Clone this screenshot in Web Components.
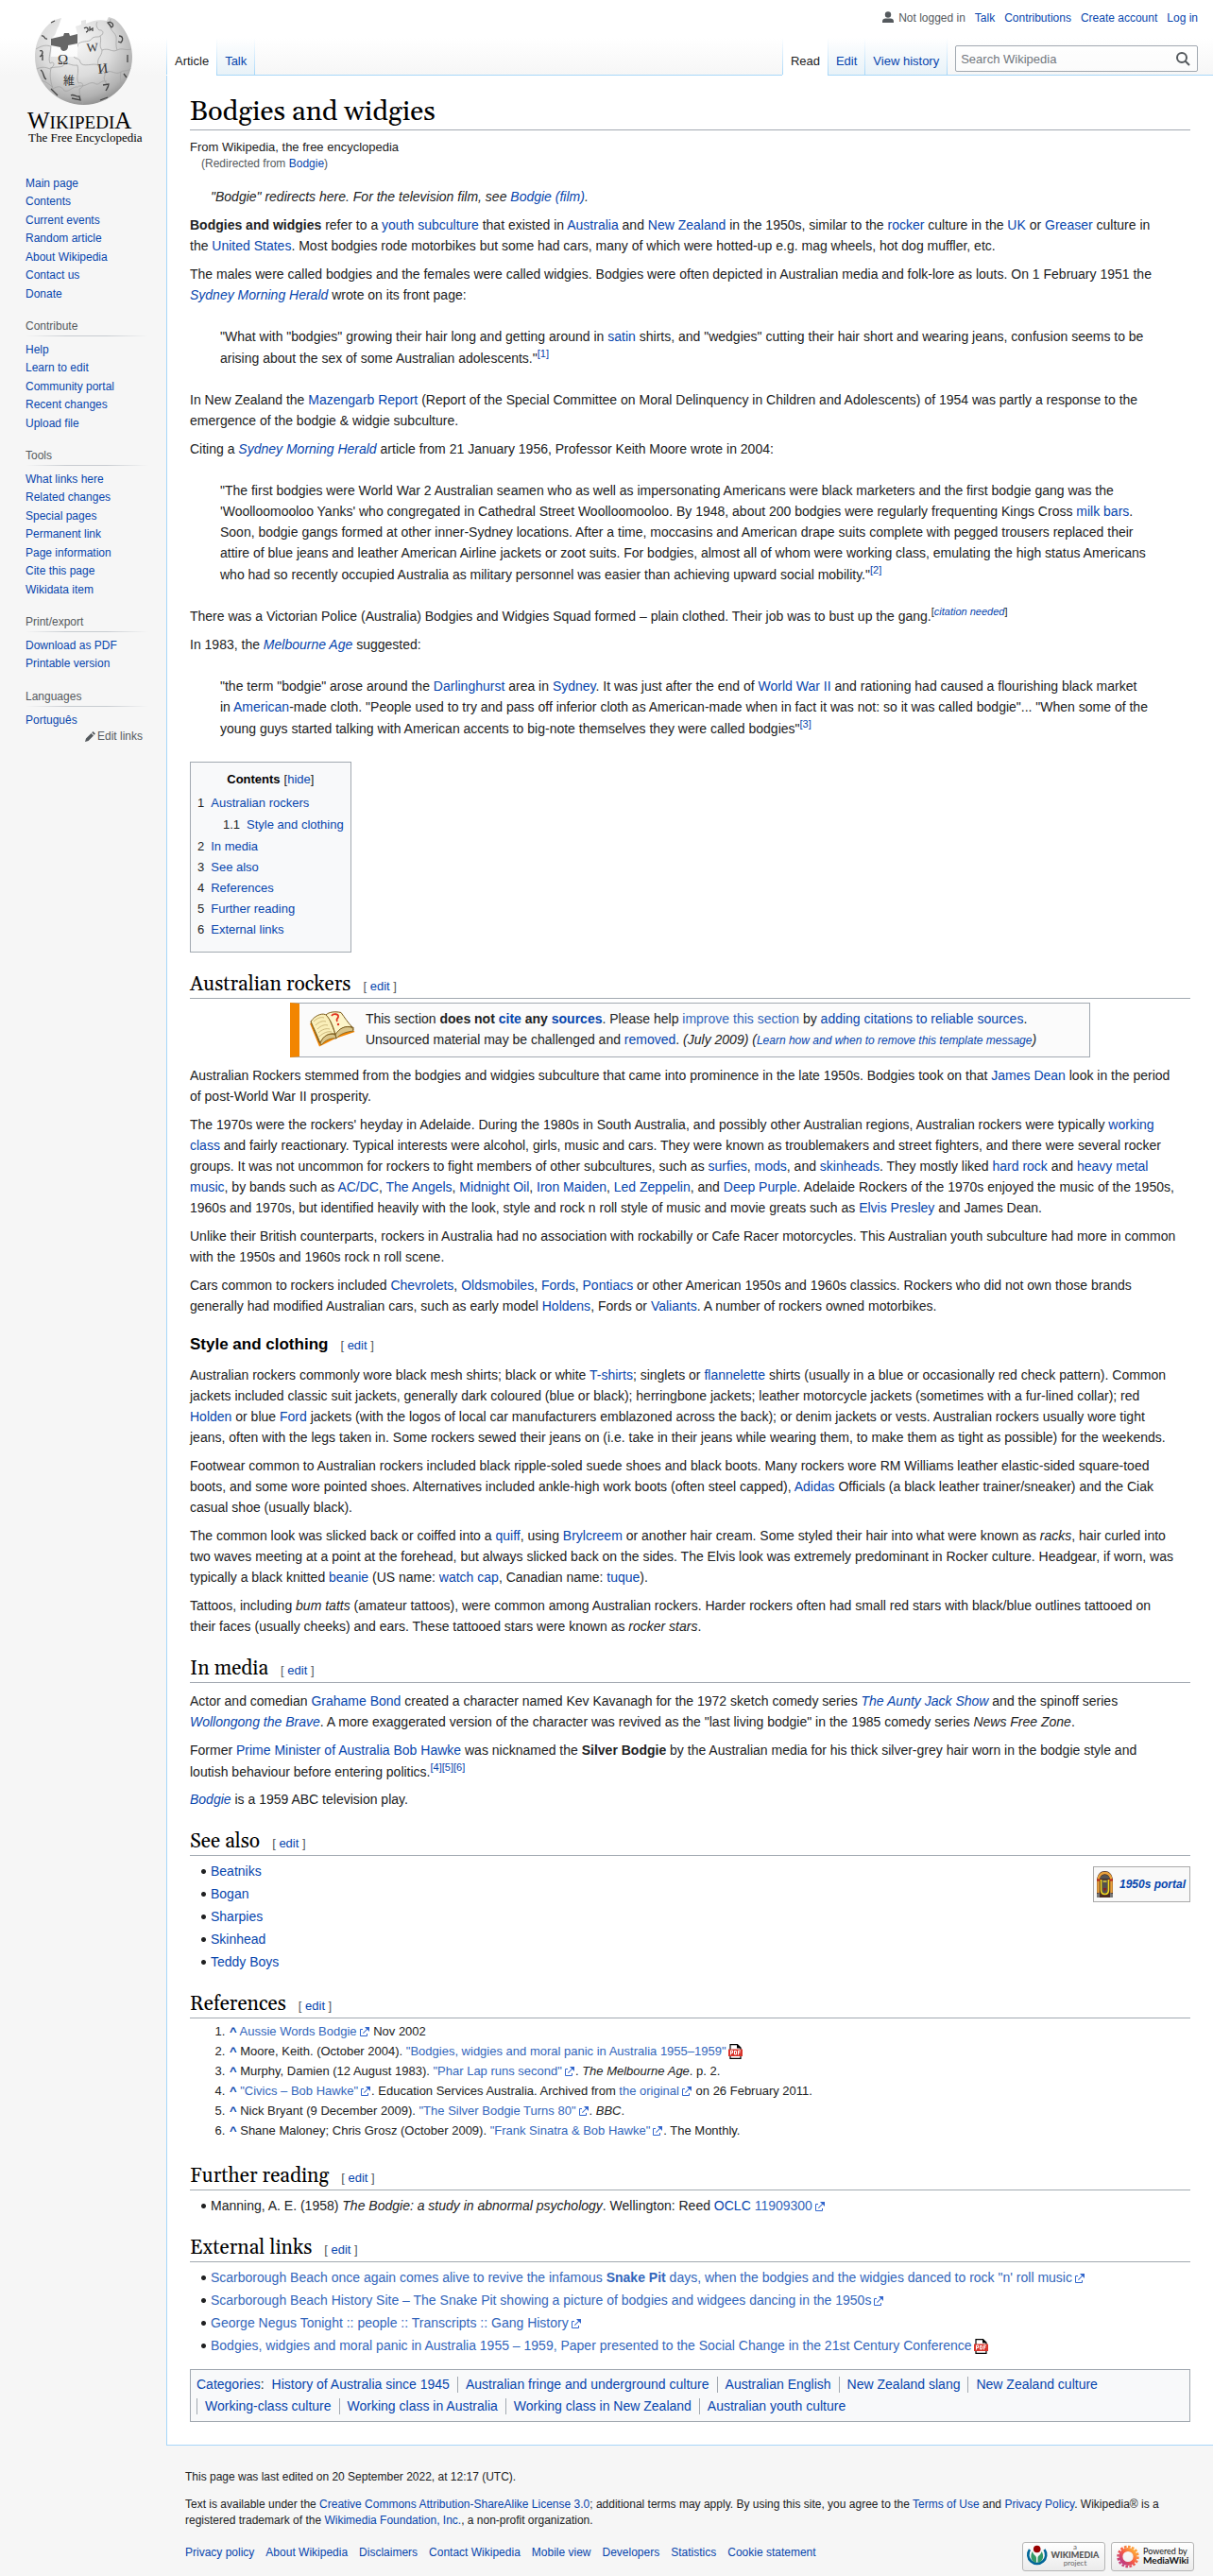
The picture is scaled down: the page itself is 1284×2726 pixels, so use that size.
<!DOCTYPE html>
<html lang="en">
<head>
<meta charset="utf-8">
<meta name="viewport" content="width=device-width, initial-scale=1">
<title>Bodgies and widgies - Wikipedia</title>
<style>
  :root { --link: #0645ad; --ext: #3366bb; --text: #202122; --muted: #54595d; --rule: #a2a9b1; --tab: #a7d7f9; --serif: Georgia, Gelasio, "Liberation Serif", serif; }
  body { margin: 0; color: var(--text); background: #f6f6f6; font: 14px/22px "Liberation Sans", Arial, sans-serif; }
  a { color: var(--link); text-decoration: none; }
  a:hover { text-decoration: underline; }
  p { margin: 8px 0; }
  article > p { padding-right: 11px; }
  b a { font-weight: bold; }
  sup { font-size: 11px; line-height: 14px; vertical-align: super; }
  article ul { margin: 5px 0 0 12px; padding: 0; list-style: none; }
  article ul li { padding-left: 10px; background: radial-gradient(circle, var(--text) 2px, transparent 3px) 0 9px / 5px 5px no-repeat; }
  article ul li + li { margin-top: 2px; }
  article ol { margin: 4px 0 0 41px; padding: 0 0 3px; font-size: 13px; line-height: 20px; }
  article ol li { padding-left: 1px; margin-bottom: 1px; }
  .backlink { font-weight: bold; }
  .sub { font-size: 13px; line-height: 20px; }
  .redirect { font-size: 12px; line-height: 14px; margin: 0 0 17px 12px; color: var(--muted); }
  .hatnote { font-style: italic; padding-left: 22px; margin-bottom: 7px; }
</style>
</head>
<body>

<wiki-page>
  <wiki-logo slot="side"></wiki-logo>
  <side-portlet slot="side" items="Main page|Contents|Current events|Random article|About Wikipedia|Contact us|Donate"></side-portlet>
  <side-portlet slot="side" heading="Contribute" items="Help|Learn to edit|Community portal|Recent changes|Upload file"></side-portlet>
  <side-portlet slot="side" heading="Tools" items="What links here|Related changes|Special pages|Permanent link|Page information|Cite this page|Wikidata item"></side-portlet>
  <side-portlet slot="side" heading="Print/export" items="Download as PDF|Printable version"></side-portlet>
  <side-portlet slot="side" heading="Languages" items="Português" edit="Edit links"></side-portlet>

  <personal-tools slot="header"></personal-tools>
  <page-tabs slot="header"></page-tabs>

  <article>
    <wiki-heading level="1">Bodgies and widgies</wiki-heading>
    <div class="sub">From Wikipedia, the free encyclopedia</div>
    <div class="redirect">(Redirected from <a href="#">Bodgie</a>)</div>
    <div class="hatnote">"Bodgie" redirects here. For the television film, see <a href="#">Bodgie (film)</a>.</div>

    <p><b>Bodgies and widgies</b> refer to a <a href="#">youth subculture</a> that existed in <a href="#">Australia</a> and <a href="#">New Zealand</a> in the 1950s, similar to the <a href="#">rocker</a> culture in the <a href="#">UK</a> or <a href="#">Greaser</a> culture in the&nbsp;<a href="#">United States</a>. Most bodgies rode motorbikes but some had cars, many of which were hotted-up e.g. mag wheels, hot dog muffler, etc.</p>
    <p>The males were called bodgies and the females were called widgies. Bodgies were often depicted in Australian media and folk-lore as louts. On 1 February 1951 the <i><a href="#">Sydney Morning Herald</a></i> wrote on its front page:</p>
    <quote-block>"What with "bodgies" growing their hair long and getting around in <a href="#">satin</a> shirts, and "wedgies" cutting their hair short and wearing jeans, confusion seems to be arising about the sex of some Australian adolescents."<sup><a href="#">[1]</a></sup></quote-block>
    <p>In New Zealand the <a href="#">Mazengarb Report</a> (Report of the Special Committee on Moral Delinquency in Children and Adolescents) of 1954 was partly a response to the emergence of the bodgie &amp; widgie subculture.</p>
    <p>Citing a <i><a href="#">Sydney Morning Herald</a></i> article from 21 January 1956, Professor Keith Moore wrote in 2004:</p>
    <quote-block>"The first bodgies were World War 2 Australian seamen who as well as impersonating Americans were black marketers and the first bodgie gang was the 'Woolloomooloo Yanks' who congregated in Cathedral Street Woolloomooloo. By 1948, about 200 bodgies were regularly frequenting Kings Cross <a href="#">milk bars</a>. Soon, bodgie gangs formed at other inner-Sydney locations. After a time, moccasins and American drape suits complete with pegged trousers replaced their attire of blue jeans and leather American Airline jackets or zoot suits. For bodgies, almost all of whom were working class, emulating the high status Americans who had so recently occupied Australia as military personnel was easier than achieving upward social mobility."<sup><a href="#">[2]</a></sup></quote-block>
    <p>There was a Victorian Police (Australia) Bodgies and Widgies Squad formed – plain clothed. Their job was to bust up the gang.<sup>[<i><a href="#">citation needed</a></i>]</sup></p>
    <p>In 1983, the <i><a href="#">Melbourne Age</a></i> suggested:</p>
    <quote-block>"the term "bodgie" arose around the <a href="#">Darlinghurst</a> area in <a href="#">Sydney</a>. It was just after the end of <a href="#">World War II</a> and rationing had caused a flourishing black market in <a href="#">American</a>-made cloth. "People used to try and pass off inferior cloth as American-made when in fact it was not: so it was called bodgie"... "When some of the young guys started talking with American accents to big-note themselves they were called bodgies"<sup><a href="#">[3]</a></sup></quote-block>

    <toc-box></toc-box>

    <wiki-heading>Australian rockers</wiki-heading>
    <notice-box>This section <b>does not <a href="#">cite</a> any <a href="#">sources</a></b>. Please help <a href="#" style="color: var(--ext)">improve this section</a> by <a href="#">adding citations to reliable sources</a>. Unsourced material may be challenged and <a href="#">removed</a>. <i>(July 2009)</i> <i>(<a href="#" style="font-size: 12px">Learn how and when to remove this template message</a>)</i></notice-box>
    <p>Australian Rockers stemmed from the bodgies and widgies subculture that came into prominence in the late 1950s. Bodgies took on that <a href="#">James Dean</a> look in the period of post-World War II prosperity.</p>
    <p>The 1970s were the rockers' heyday in Adelaide. During the 1980s in South Australia, and possibly other Australian regions, Australian rockers were typically <a href="#">working class</a> and fairly reactionary. Typical interests were alcohol, girls, music and cars. They were known as troublemakers and street fighters, and there were several rocker groups. It was not uncommon for rockers to fight members of other subcultures, such as <a href="#">surfies</a>, <a href="#">mods</a>, and <a href="#">skinheads</a>. They mostly liked <a href="#">hard rock</a> and <a href="#">heavy metal music</a>, by bands such as <a href="#">AC/DC</a>, <a href="#">The Angels</a>, <a href="#">Midnight Oil</a>, <a href="#">Iron Maiden</a>, <a href="#">Led Zeppelin</a>, and <a href="#">Deep Purple</a>. Adelaide Rockers of the 1970s enjoyed the music of the 1950s, 1960s and 1970s, but identified heavily with the look, style and rock n roll style of music and movie greats such as <a href="#">Elvis Presley</a> and James Dean.</p>
    <p>Unlike their British counterparts, rockers in Australia had no association with rockabilly or Cafe Racer motorcycles. This Australian youth subculture had more in common with the 1950s and 1960s rock n roll scene.</p>
    <p>Cars common to rockers included <a href="#">Chevrolets</a>, <a href="#">Oldsmobiles</a>, <a href="#">Fords</a>, <a href="#">Pontiacs</a> or other American 1950s and 1960s classics. Rockers who did not own those brands generally had modified Australian cars, such as early model <a href="#">Holdens</a>, Fords or <a href="#">Valiants</a>. A number of rockers owned motorbikes.</p>

    <wiki-heading level="3">Style and clothing</wiki-heading>
    <p>Australian rockers commonly wore black mesh shirts; black or white <a href="#">T-shirts</a>; singlets or <a href="#">flannelette</a> shirts (usually in a blue or occasionally red check pattern). Common jackets included classic suit jackets, generally dark coloured (blue or black); herringbone jackets; leather motorcycle jackets (sometimes with a fur-lined collar); red <a href="#">Holden</a> or blue <a href="#">Ford</a> jackets (with the logos of local car manufacturers emblazoned across the back); or denim jackets or vests. Australian rockers usually wore tight jeans, often with the legs taken in. Some rockers sewed their jeans on (i.e. take in their jeans while wearing them, to make them as tight as possible) for the weekends.</p>
    <p>Footwear common to Australian rockers included black ripple-soled suede shoes and black boots. Many rockers wore RM Williams leather elastic-sided square-toed boots, and some wore pointed shoes. Alternatives included ankle-high work boots (often steel capped), <a href="#">Adidas</a> Officials (a black leather trainer/sneaker) and the Ciak casual shoe (usually black).</p>
    <p>The common look was slicked back or coiffed into a <a href="#">quiff</a>, using <a href="#">Brylcreem</a> or another hair cream. Some styled their hair into what were known as <i>racks</i>, hair curled into two waves meeting at a point at the forehead, but always slicked back on the sides. The Elvis look was extremely predominant in Rocker culture. Headgear, if worn, was typically a black knitted <a href="#">beanie</a> (US name: <a href="#">watch cap</a>, Canadian name: <a href="#">tuque</a>).</p>
    <p>Tattoos, including <i>bum tatts</i> (amateur tattoos), were common among Australian rockers. Harder rockers often had small red stars with black/blue outlines tattooed on their&nbsp;faces (usually cheeks) and ears. These tattooed stars were known as <i>rocker stars</i>.</p>

    <wiki-heading>In media</wiki-heading>
    <p>Actor and comedian <a href="#">Grahame Bond</a> created a character named Kev Kavanagh for the 1972 sketch comedy series <i><a href="#">The Aunty Jack Show</a></i> and the spinoff series <i><a href="#">Wollongong the Brave</a></i>. A more exaggerated version of the character was revived as the "last living bodgie" in the 1985 comedy series <i>News Free Zone</i>.</p>
    <p>Former <a href="#">Prime Minister of Australia</a> <a href="#">Bob Hawke</a> was nicknamed the <b>Silver Bodgie</b> by the Australian media for his thick silver-grey hair worn in the bodgie style and loutish&nbsp;behaviour before entering politics.<sup><a href="#">[4]</a><a href="#">[5]</a><a href="#">[6]</a></sup></p>
    <p><i><a href="#">Bodgie</a></i> is a 1959 ABC television play.</p>

    <wiki-heading>See also</wiki-heading>
    <see-also>
      <ul>
        <li><a href="#">Beatniks</a></li>
        <li><a href="#">Bogan</a></li>
        <li><a href="#">Sharpies</a></li>
        <li><a href="#">Skinhead</a></li>
        <li><a href="#">Teddy Boys</a></li>
      </ul>
      <portal-box slot="aside">1950s portal</portal-box>
    </see-also>

    <wiki-heading>References</wiki-heading>
    <ol>
      <li><a class="backlink" href="#">^</a> <ext-link>Aussie Words Bodgie</ext-link> Nov 2002</li>
      <li><a class="backlink" href="#">^</a> Moore, Keith. (October 2004). <ext-link type="pdf">"Bodgies, widgies and moral panic in Australia 1955–1959"</ext-link></li>
      <li><a class="backlink" href="#">^</a> Murphy, Damien (12 August 1983). <ext-link>"Phar Lap runs second"</ext-link>. <i>The Melbourne Age</i>. p. 2.</li>
      <li><a class="backlink" href="#">^</a> <ext-link>"Civics – Bob Hawke"</ext-link>. Education Services Australia. Archived from <ext-link>the original</ext-link> on 26 February 2011.</li>
      <li><a class="backlink" href="#">^</a> Nick Bryant (9 December 2009). <ext-link>"The Silver Bodgie Turns 80"</ext-link>. <i>BBC</i>.</li>
      <li><a class="backlink" href="#">^</a> Shane Maloney; Chris Grosz (October 2009). <ext-link>"Frank Sinatra &amp; Bob Hawke"</ext-link>. The Monthly.</li>
    </ol>

    <wiki-heading>Further reading</wiki-heading>
    <ul>
      <li>Manning, A. E. (1958) <i>The Bodgie: a study in abnormal psychology</i>. Wellington: Reed <a href="#">OCLC</a> <ext-link>11909300</ext-link></li>
    </ul>

    <wiki-heading>External links</wiki-heading>
    <ul>
      <li><ext-link>Scarborough Beach once again comes alive to revive the infamous <b>Snake Pit</b> days, when the bodgies and the widgies danced to rock "n' roll music</ext-link></li>
      <li><ext-link>Scarborough Beach History Site – The Snake Pit showing a picture of bodgies and widgees dancing in the 1950s</ext-link></li>
      <li><ext-link>George Negus Tonight :: people :: Transcripts :: Gang History</ext-link></li>
      <li><ext-link type="pdf">Bodgies, widgies and moral panic in Australia 1955 – 1959, Paper presented to the Social Change in the 21st Century Conference</ext-link></li>
    </ul>

    <category-bar items="History of Australia since 1945|Australian fringe and underground culture|Australian English|New Zealand slang|New Zealand culture|Working-class culture|Working class in Australia|Working class in New Zealand|Australian youth culture"></category-bar>
  </article>

  <wiki-footer slot="footer">
    <p slot="info">This page was last edited on 20 September 2022, at 12:17 (UTC).</p>
    <p slot="info">Text is available under the <a href="#">Creative Commons Attribution-ShareAlike License 3.0</a>; additional terms may apply. By using this site, you agree to the <a href="#">Terms of Use</a> and <a href="#">Privacy Policy</a>. Wikipedia® is a registered trademark of the <a href="#">Wikimedia Foundation, Inc.</a>, a non-profit organization.</p>
  </wiki-footer>
</wiki-page>

<script>
const LINK = `a { color: var(--link); text-decoration: none; } a:hover { text-decoration: underline; }`;

function define(name, render) {
  customElements.define(name, class extends HTMLElement {
    constructor() { super(); this.attachShadow({ mode: 'open' }); }
    connectedCallback() {
      const t = document.createElement('template');
      t.innerHTML = render(this);
      this.shadowRoot.replaceChildren(t.content);
      if (this.localName === 'toc-box') {
        const button = this.shadowRoot.querySelector('button');
        const list = this.shadowRoot.querySelector('ul');
        button.addEventListener('click', () => {
          list.hidden = !list.hidden;
          button.textContent = list.hidden ? 'show' : 'hide';
        });
      }
    }
  });
}

define('wiki-page', () => `
  <style>
    :host { display: flex; align-items: stretch; background: linear-gradient(#fff 40px, #f6f6f6 80px); }
    nav { flex: 0 0 176px; }
    .column { flex: 1; min-width: 0; }
    main { background: #fff; border-left: 1px solid var(--tab); border-bottom: 1px solid var(--tab); padding: 20px 24px 24px; }
  </style>
  <nav><slot name="side"></slot></nav>
  <div class="column">
    <header><slot name="header"></slot></header>
    <main><slot></slot></main>
    <slot name="footer"></slot>
  </div>`);

define('wiki-logo', () => `
  <style>
    :host { display: block; padding-bottom: 25px; }
    a, svg { display: block; width: 100%; }
  </style>
  <a href="#" aria-label="Visit the main page">
  <svg viewBox="0 0 176 160" font-family="Liberation Serif, serif">
    <defs>
      <radialGradient id="g" cx="0.42" cy="0.3" r="0.75">
        <stop offset="0" stop-color="#f6f6f6"/><stop offset="0.5" stop-color="#dcdcdc"/><stop offset="0.82" stop-color="#b2b2b2"/><stop offset="1" stop-color="#858585"/>
      </radialGradient>
      <clipPath id="c"><path d="M65,19 58,21C46,28 37,43 37,60A51.500,51 0 0 0 140,60C140,43 131,27 121,20L115,18 113,22C105,20 98,22 91,25L91,21 86,22 86,26 80,28 82,36V60H54L55,40C60,37 59,32 62,28Z"/></clipPath>
    </defs>
    <path fill="url(#g)" d="M65,19 58,21C46,28 37,43 37,60A51.500,51 0 0 0 140,60C140,43 131,27 121,20L115,18 113,22C105,20 98,22 91,25L91,21 86,22 86,26 80,28 82,36V60H54L55,40C60,37 59,32 62,28Z"/>
    <path fill="#666" d="M54,41 67,38 68,35H73L74,38 82,36V46L72,48C73,55 64,56 64,50L54,48Z"/>
    <g clip-path="url(#c)" fill="none" stroke="#a4a4a4" stroke-width="0.8">
      <path d="M38,52C46,47 50,48 54,49M54,49C53,58 51,62 53,67C57,64 59,69 54,72C52,80 54,88 56,94M37,74C44,70 48,71 53,73M82,46C84,50 78,52 77,58C79,64 84,60 85,66C87,72 100,66 104,69M104,69C102,61 108,60 108,53C104,48 108,44 106,38C111,36 109,31 105,32C101,28 102,25 103,23M83,46C90,42 94,46 98,40C102,38 104,40 106,38M53,72C62,70 66,72 68,68C73,66 75,70 82,69M82,69C84,78 80,82 83,88C88,86 90,92 84,94C84,100 86,106 88,110M56,94C62,90 66,92 68,96C74,98 76,91 83,92M83,91C92,92 94,86 100,88C105,92 106,84 113,86M104,69C106,76 112,74 111,80C108,84 114,88 113,92C116,96 112,102 110,108M108,53C116,50 118,56 124,53C130,50 132,54 139,52M112,76C120,74 122,80 128,76C132,74 136,76 139,72M124,53C121,44 126,40 120,34C116,30 116,26 117,20M128,76C126,84 130,88 127,96M40,86C48,84 52,90 56,92"/>
    </g>
    <g fill="#333">
      <text x="61" y="68" font-size="15">Ω</text>
      <text x="92" y="55" font-size="13" transform="rotate(-4 92 55)">W</text>
      <text x="104" y="78" font-size="15" transform="rotate(-6 104 78)">И</text>
      <text x="67" y="90" font-size="12" font-family="Noto Sans CJK JP, sans-serif">維</text>
    </g>
    <g fill="none" stroke="#444" stroke-width="1.300">
      <path d="M109,90L115,89C115,92 113,94 112,96M89,30C93,27 95,33 91,34M95,28V32L98,30 98,33M126,38C130,38 131,42 128,45L125,44M44,38C48,37 46,42 50,41M42,54C46,52 46,58 42,60M45,58V64M43,74C47,76 45,82 49,84M54,94L61,101M75,101C78,99 80,103 84,102L85,106 76,104M106,106L114,103M131,78L134,82M135,58V66M114,24C118,22 122,27 118,29ZM54,24L58,22"/>
    </g>
    <text x="29" y="136" font-size="25">W<tspan font-size="19">IKIPEDI</tspan>A</text>
    <text x="30" y="150" font-size="13">The Free Encyclopedia</text>
  </svg></a>`);

define('side-portlet', el => {
  const heading = el.getAttribute('heading'), edit = el.getAttribute('edit');
  return `
  <style>
    ${LINK}
    :host { display: block; margin: 0 19px 14px 27px; font-size: 12px; line-height: 13px; }
    h3 { margin: 0; font-size: 12px; font-weight: normal; line-height: 20px; color: var(--muted); padding-bottom: 1px;
         background: linear-gradient(to right, rgba(200,204,209,0), #c8ccd1 33%, #c8ccd1 66%, rgba(200,204,209,0)) bottom / 100% 1px no-repeat; }
    ul { list-style: none; margin: 0; padding: 0; }
    h3 + ul { padding-top: 5px; }
    li { padding: 3px 0; }
    li:nth-child(even) { padding-bottom: 4px; }
    .edit { display: flex; justify-content: flex-end; align-items: center; gap: 2px; padding-right: 6px; line-height: 14px; }
    .edit a { color: var(--muted); }
  </style>
  ${heading ? `<h3>${heading}</h3>` : ''}
  <ul>${el.getAttribute('items').split('|').map(t => `<li><a href="#">${t}</a></li>`).join('')}</ul>
  ${edit ? `<div class="edit"><svg width="11" height="11" viewBox="0 0 11 11" fill="#54595d"><path d="M0,11 1,7.500 6.500,2 9,4.500 3.500,10ZM7.200,1.300 8.500,0 11,2.500 9.700,3.800Z"/></svg><a href="#">${edit}</a></div>` : ''}`;
});

define('personal-tools', () => `
  <style>
    ${LINK}
    :host { display: block; }
    ul { display: flex; justify-content: flex-end; align-items: center; flex-wrap: wrap; gap: 0 10px; list-style: none; margin: 0; padding: 11px 16px 13px 0; font-size: 12px; line-height: 16px; }
    .anon { display: flex; align-items: center; gap: 5px; color: var(--muted); }
  </style>
  <ul>
    <li class="anon"><svg width="12" height="14" viewBox="0 0 12 14" fill="#54595d"><circle cx="6" cy="3.500" r="3.200"/><path d="M0,12V10.500C0,8.500 1.500,7.500 3.500,7.500H8.500C10.500,7.500 12,8.500 12,10.500V12Z"/></svg>Not logged in</li>
    <li><a href="#">Talk</a></li><li><a href="#">Contributions</a></li><li><a href="#">Create account</a></li><li><a href="#">Log in</a></li>
  </ul>`);

define('page-tabs', () => `
  <style>
    ${LINK}
    :host { display: flex; font-size: 13px; line-height: 16px; }
    a { box-sizing: border-box; height: 40px; padding: 17px 8px 0 9px; white-space: nowrap; border-bottom: 1px solid var(--tab);
        background: linear-gradient(#fff, var(--tab)) left / 1px 100% no-repeat, linear-gradient(#fff, #e8f2f8); }
    a.on { color: var(--text); border-bottom-color: #fff; background: linear-gradient(#fff, var(--tab)) left / 1px 100% no-repeat, #fff; }
    .gap { flex: 1; }
    .gap, form { border-bottom: 1px solid var(--tab); background: linear-gradient(#fff, var(--tab)) left / 1px 100% no-repeat; }
    form { padding: 8px 16px 3px 9px; }
    .box { display: flex; align-items: center; box-sizing: border-box; width: 20vw; height: 28px; border: 1px solid var(--rule); border-radius: 2px; background: rgba(255,255,255,.5); }
    input { flex: 1; min-width: 0; border: 0; background: none; padding: 0 0 0 5px; font: 13px "Liberation Sans", sans-serif; outline: none; }
    input::placeholder { color: #72777d; opacity: 1; }
    button { border: 0; background: none; padding: 0 7px; display: flex; cursor: pointer; }
  </style>
  <a class="on" href="#">Article</a><a href="#">Talk</a>
  <div class="gap"></div>
  <a class="on" href="#">Read</a><a href="#">Edit</a><a href="#">View history</a>
  <form onsubmit="return false"><div class="box">
    <input type="search" aria-label="Search Wikipedia" placeholder="Search Wikipedia">
    <button aria-label="Go"><svg width="15" height="15" viewBox="0 0 15 15" fill="none" stroke="#54595d" stroke-width="2"><circle cx="6" cy="6" r="5"/><path d="M9.500,9.500 14,14"/></svg></button>
  </div></form>`);

define('wiki-heading', el => {
  const n = el.getAttribute('level') || '2';
  const edit = n === '1' ? '' : '<span>[ <a href="#">edit</a> ]</span>';
  return `
  <style>
    ${LINK}
    :host { display: block; margin-top: 21px; }
    :host([level="1"]) { margin: 0 0 8px; }
    :host([level="3"]) { margin: 8px 0; padding-top: 8px; }
    div { display: flex; align-items: baseline; flex-wrap: wrap; column-gap: 13px; color: #000; }
    .l1, .l2 { border-bottom: 1px solid var(--rule); }
    h1, h2, h3 { margin: 0; font-weight: normal; }
    h1 { font: 29px/37px var(--serif); }
    h2 { font: 21px/27px var(--serif); }
    h3 { font-size: 17px; line-height: 27px; font-weight: bold; }
    span { font-size: 13px; line-height: 16px; color: var(--muted); }
  </style>
  <div class="l${n}"><h${n}><slot></slot></h${n}>${edit}</div>`;
});

define('quote-block', () => `
  <style>
    :host { display: block; margin: 14px 0; padding: 8px 44px 8px 32px; }
    blockquote { margin: 0; }
  </style>
  <blockquote><slot></slot></blockquote>`);

define('toc-box', () => {
  const row = (n, t, sub = '') => `<li><a href="#"><span>${n}</span>${t}</a>${sub}</li>`;
  return `
  <style>
    ${LINK}
    :host { display: table; box-sizing: border-box; margin-top: 16px; padding: 7px; border: 1px solid var(--rule); background: #f8f9fa; font-size: 13px; }
    .title { display: flex; justify-content: center; gap: 4px; padding-bottom: 3px; }
    h2 { margin: 0; font-size: 13px; line-height: 22px; color: #000; }
    button { border: 0; background: none; padding: 0; font: inherit; color: var(--link); cursor: pointer; }
    ul { list-style: none; margin: 0; padding: 0; }
    ul ul { margin-left: 27px; padding: 1px 0; }
    .list { padding-bottom: 5px; }
    li span { color: var(--text); padding-right: 7px; }
  </style>
  <div class="title"><h2>Contents</h2><div>[<button>hide</button>]</div></div>
  <ul class="list">
    ${row('1', 'Australian rockers', `<ul>${row('1.1', 'Style and clothing')}</ul>`)}
    ${row('2', 'In media')}${row('3', 'See also')}${row('4', 'References')}${row('5', 'Further reading')}${row('6', 'External links')}
  </ul>`;
});

define('notice-box', () => `
  <style>
    :host { display: flex; align-items: center; gap: 11px; box-sizing: border-box; width: 80%; margin: 4px auto 7px; padding: 5px 40px 6px 11px; border: 1px solid var(--rule); border-left: 10px solid #f28500; background: #fbfbfb; }
    svg { flex: none; }
  </style>
  <svg width="48" height="38" viewBox="0 0 48 38" stroke-linejoin="round">
    <path d="M0,13 10,37.500 27,29 47.500,22 44,18 12,33 3,12Z" fill="#f28500"/>
    <path d="M1,11 10,33 27,25 46,20V17L27,25Z" fill="#e9d9a0" stroke="#7a5a1c"/>
    <path d="M1,11C5,5 12,2 16,3.500C19,4 20,6 27,24C20,23 14,26 11,34C9,28 4,18 1,11Z" fill="#faefb9" stroke="#7a5a1c"/>
    <path d="M17,4C20,1 26,0 33,1.500C37,7 40,12 45,17C38,15 31,18 27,25C25,17 22,9 17,4Z" fill="#fdf5c9" stroke="#7a5a1c"/>
    <path d="M27,25C31,18 38,15 45,17.500L46,21C38,22 32,24 28,29ZM11,34C14,26 20,23 27,25L28,29C22,28 16,31 12,36Z" fill="#d9c58a" stroke="#7a5a1c" stroke-width="0.800"/>
    <path d="M4,11C8,7 12,6 15,7M6,15C10,11 14,10 17,11M8,19C12,15 16,14 19,15M9,23C13,19 18,18 21,19M10,27C14,23 19,21 23,22" fill="none" stroke="#c0aa6c" stroke-width="0.800"/>
    <path d="M23,5C25,2 31,3 30,6C30,8 27,8 29,11" fill="none" stroke="#e0301e" stroke-width="1.800"/><circle cx="30" cy="14" r="1.200" fill="#e0301e"/>
  </svg>
  <div><slot></slot></div>`);

define('see-also', () => `
  <style>
    :host { display: flex; justify-content: space-between; align-items: flex-start; }
    .aside { padding-top: 11px; }
  </style>
  <div><slot></slot></div><div class="aside"><slot name="aside"></slot></div>`);

define('portal-box', () => `
  <style>
    :host { display: flex; align-items: center; gap: 7px; border: 1px solid #aaa; background: #f9f9f9; padding: 4px 4px 4px 3px; font-size: 12px; font-weight: bold; font-style: italic; }
    a { color: var(--link); text-decoration: none; white-space: nowrap; }
  </style>
  <svg width="17" height="28" viewBox="0 0 17 28">
    <path d="M0,28V9C1,3 4,0 8.500,0S16,3 17,9V28Z" fill="#4a2a20"/>
    <path d="M1.500,23V10C2,4.500 5,2 8.500,2S15,4.500 15.500,10V23" fill="none" stroke="#e8a13c" stroke-width="2.500"/>
    <path d="M3.500,8C4,5 6,4 8.500,4S13,5 13.500,8Z" fill="#555"/>
    <path d="M0,9.500H4M13,9.500H17" stroke="#b0251c" stroke-width="2"/>
    <path d="M4.500,9V20C4.500,26 12.500,26 12.500,20V9" fill="#54504c" stroke="#f0d820" stroke-width="1.600"/>
    <path d="M6.500,11H10.500" stroke="#e8d030" stroke-width="1.500"/>
    <path d="M6.500,18H10.500L8.500,22Z" fill="#8a2020"/>
    <path d="M0,24 3,23V28H0ZM17,24 14,23V28H17Z" fill="#777"/>
  </svg>
  <a href="#"><slot></slot></a>`);

define('ext-link', el => {
  const icon = el.getAttribute('type') === 'pdf'
    ? `<svg class="pdf" width="15" height="16" viewBox="0 0 15 16"><path d="M2,.600H9.500L13,4V15.400H2Z" fill="#fff" stroke="#000" stroke-width="1.200"/><path d="M9,0V4.500H13.500Z"/><path d="M0,5.500H15V13H0Z" fill="#d9342b"/><path d="M2.500,11.500V7H4.500V9.500H2.500M6.500,7V11H8.500V7.500H6.500M10.500,11.500V7H13M10.500,9H12.500" fill="none" stroke="#fff"/></svg>`
    : `<svg width="12" height="12" viewBox="0 0 12 12" fill="#3366cc"><path d="M6,1h5v5L8.860,3.850 4.700,8 4,7.300l4.150-4.160zM2,3h2v1H2v6h6V8h1v2a1,1 0 0 1-1,1H2a1,1 0 0 1-1-1V4a1,1 0 0 1 1-1"/></svg>`;
  return `
  <style>
    ${LINK}
    :host { display: inline; }
    a { color: var(--ext); }
    svg { margin-left: 2px; vertical-align: -2px; }
    .pdf { vertical-align: -4px; }
  </style><a href="#"><slot></slot>${icon}</a>`;
});

define('category-bar', el => `
  <style>
    ${LINK}
    :host { display: block; margin-top: 14px; padding: 4px 6px; border: 1px solid var(--rule); background: #f8f9fa; }
    ul { display: inline; list-style: none; margin: 0; padding: 0; }
    li { display: inline-block; line-height: 17px; margin: 3px 0; padding: 0 8px; border-left: 1px solid var(--rule); }
    li:first-child { border: 0; }
  </style><a href="#">Categories</a>:<ul>${el.getAttribute('items').split('|').map(t => `<li><a href="#">${t}</a></li>`).join('<wbr>')}</ul>`);

define('wiki-footer', () => `
  <style>
    ${LINK}
    :host { display: block; padding: 25px 20px 5px; font-size: 12px; line-height: 17px; }
    ::slotted(p) { margin: 0 0 12px !important; }
    .row { display: flex; justify-content: space-between; align-items: center; flex-wrap: wrap; gap: 6px; }
    ul { display: flex; flex-wrap: wrap; gap: 0 12px; list-style: none; margin: 0; padding: 0 0 6px; }
    .badges { display: flex; gap: 6px; padding-top: 2px; }
    .badges a, .badges svg { display: block; }
  </style>
  <slot name="info"></slot>
  <div class="row">
    <ul>${['Privacy policy', 'About Wikipedia', 'Disclaimers', 'Contact Wikipedia', 'Mobile view', 'Developers', 'Statistics', 'Cookie statement'].map(t => `<li><a href="#">${t}</a></li>`).join('')}</ul>
    <div class="badges">
      <a href="#" aria-label="Wikimedia Foundation"><svg width="88" height="31" viewBox="0 0 88 31">
        <defs><linearGradient id="b" x2="0" y2="1"><stop stop-color="#fff"/><stop offset="1" stop-color="#ebebeb"/></linearGradient></defs>
        <rect x=".500" y=".500" width="87" height="30" rx="2.500" fill="url(#b)" stroke="#b5b5b5"/>
        <path d="M8,8A9.500,9.500 0 1 0 23.500,8" fill="none" stroke="#006699" stroke-width="2.600"/>
        <path d="M15,22C9,21 8,14 11,10C11.500,14 15,14 15,17ZM16.500,22C22.500,21 23.500,14 20.500,10C20,14 16.500,14 16.500,17Z" fill="#339966"/>
        <circle cx="15.700" cy="7.500" r="3.800" fill="#990000"/>
        <g fill="#666" text-anchor="middle" font-family="Lato, sans-serif"><text x="56" y="8" font-size="8">a</text><text x="56" y="17" font-size="9" font-weight="900" fill="#555">WIKIMEDIA</text><text x="56" y="25" font-size="8">project</text></g>
      </svg></a>
      <a href="#" aria-label="Powered by MediaWiki"><svg width="88" height="31" viewBox="0 0 88 31">
        <defs><linearGradient id="d" x2="0" y2="1"><stop stop-color="#fff"/><stop offset="1" stop-color="#ebebeb"/></linearGradient>
        <linearGradient id="f" x1="1" y1="0" x2="0" y2="1"><stop stop-color="#fb3"/><stop offset=".500" stop-color="#f65a44"/><stop offset="1" stop-color="#b3318f"/></linearGradient></defs>
        <rect x=".500" y=".500" width="87" height="30" rx="2.500" fill="url(#d)" stroke="#b5b5b5"/>
        <circle cx="18" cy="15.500" r="7.600" fill="none" stroke="url(#f)" stroke-width="4"/>
        <circle cx="18" cy="15.500" r="10.500" fill="none" stroke="url(#f)" stroke-width="2.500" stroke-dasharray="2.600 1.500"/>
        <g fill="#111" font-family="Lato, sans-serif" font-size="9"><text x="34" y="13" font-size="9">Powered by</text><text x="34" y="23" font-size="10" font-weight="bold">MediaWiki</text></g>
      </svg></a>
    </div>
  </div>`);
</script>
</body>
</html>
